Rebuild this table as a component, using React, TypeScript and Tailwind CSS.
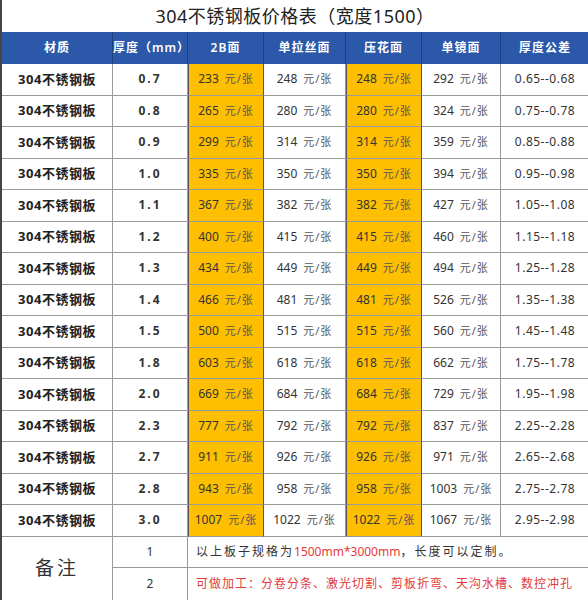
import React from 'react';

const rows = [
  ['0.7', 233, 248, 248, 292, '0.65--0.68'],
  ['0.8', 265, 280, 280, 324, '0.75--0.78'],
  ['0.9', 299, 314, 314, 359, '0.85--0.88'],
  ['1.0', 335, 350, 350, 394, '0.95--0.98'],
  ['1.1', 367, 382, 382, 427, '1.05--1.08'],
  ['1.2', 400, 415, 415, 460, '1.15--1.18'],
  ['1.3', 434, 449, 449, 494, '1.25--1.28'],
  ['1.4', 466, 481, 481, 526, '1.35--1.38'],
  ['1.5', 500, 515, 515, 560, '1.45--1.48'],
  ['1.8', 603, 618, 618, 662, '1.75--1.78'],
  ['2.0', 669, 684, 684, 729, '1.95--1.98'],
  ['2.3', 777, 792, 792, 837, '2.25--2.28'],
  ['2.7', 911, 926, 926, 971, '2.65--2.68'],
  ['2.8', 943, 958, 958, 1003, '2.75--2.78'],
  ['3.0', 1007, 1022, 1022, 1067, '2.95--2.98'],
] as const;

const headers = ['材质', '厚度（mm）', '2B面', '单拉丝面', '压花面', '单镜面', '厚度公差'];

const cell = 'flex items-center justify-center border-r border-b border-[#9a9a9a] h-[31.5px]';

const Price = ({ value }: { value: number }) => (
  <span className="text-[12px] text-[#333]">
    {value}
    <span className="ml-[6px] text-[11px] text-[#555] tracking-[1px]">元/张</span>
  </span>
);

export default function App() {
  return (
    <div
      className="w-[588px] h-[600px] bg-white overflow-hidden"
      style={{ fontFamily: '"Noto Sans", "Noto Sans CJK SC", sans-serif' }}
    >
      <div className="h-[32px] flex items-center justify-center border-l-2 border-[#444] text-[18px] text-[#222] tracking-[0.5px]">
        304不锈钢板价格表（宽度1500）
      </div>
      <div className="grid grid-cols-[111px_75px_76px_82px_76px_79px_89px] border-l-2 border-[#444]">
        {headers.map((h) => (
          <div
            key={h}
            className="h-[32px] flex items-center justify-center bg-[#2c58a9] text-white text-[12px] font-semibold border-r border-[#1d3f80] tracking-[1px]"
          >
            {h}
          </div>
        ))}
        {rows.map((r) => (
          <React.Fragment key={r[0]}>
            <div className={`${cell} text-[13px] font-bold text-[#222] tracking-[0.5px]`}>304不锈钢板</div>
            <div className={`${cell} text-[12px] font-bold text-[#333] tracking-[2px]`}>{r[0]}</div>
            <div className={`${cell} bg-[#fdbf00] border-l border-r-[#555] border-l-[#555]`}>
              <Price value={r[1]} />
            </div>
            <div className={cell}>
              <Price value={r[2]} />
            </div>
            <div className={`${cell} bg-[#fdbf00] border-l border-r-[#555] border-l-[#555]`}>
              <Price value={r[3]} />
            </div>
            <div className={cell}>
              <Price value={r[4]} />
            </div>
            <div className={`${cell} text-[12px] text-[#333] tracking-[0.5px]`}>{r[5]}</div>
          </React.Fragment>
        ))}
      </div>
      <div className="grid grid-cols-[111px_75px_402px] grid-rows-[31.5px_31.5px] border-l-2 border-b-2 border-[#444]">
        <div className="row-span-2 flex items-center justify-center border-r border-[#9a9a9a] text-[19px] text-[#333] tracking-[3px]">
          备注
        </div>
        <div className="flex items-center justify-center border-r border-b border-[#9a9a9a] text-[12px] text-[#333]">1</div>
        <div className="flex items-center pl-[8px] border-b border-[#9a9a9a] text-[12px] text-[#333] tracking-[2px]">
          以上板子规格为<span className="text-[#e33a3a] tracking-normal">1500mm*3000mm</span>，长度可以定制。
        </div>
        <div className="flex items-center justify-center border-r border-[#9a9a9a] text-[12px] text-[#333]">2</div>
        <div className="flex items-center pl-[8px] text-[12px] text-[#e33a3a] tracking-[1px]">
          可做加工：分卷分条、激光切割、剪板折弯、天沟水槽、数控冲孔
        </div>
      </div>
    </div>
  );
}
